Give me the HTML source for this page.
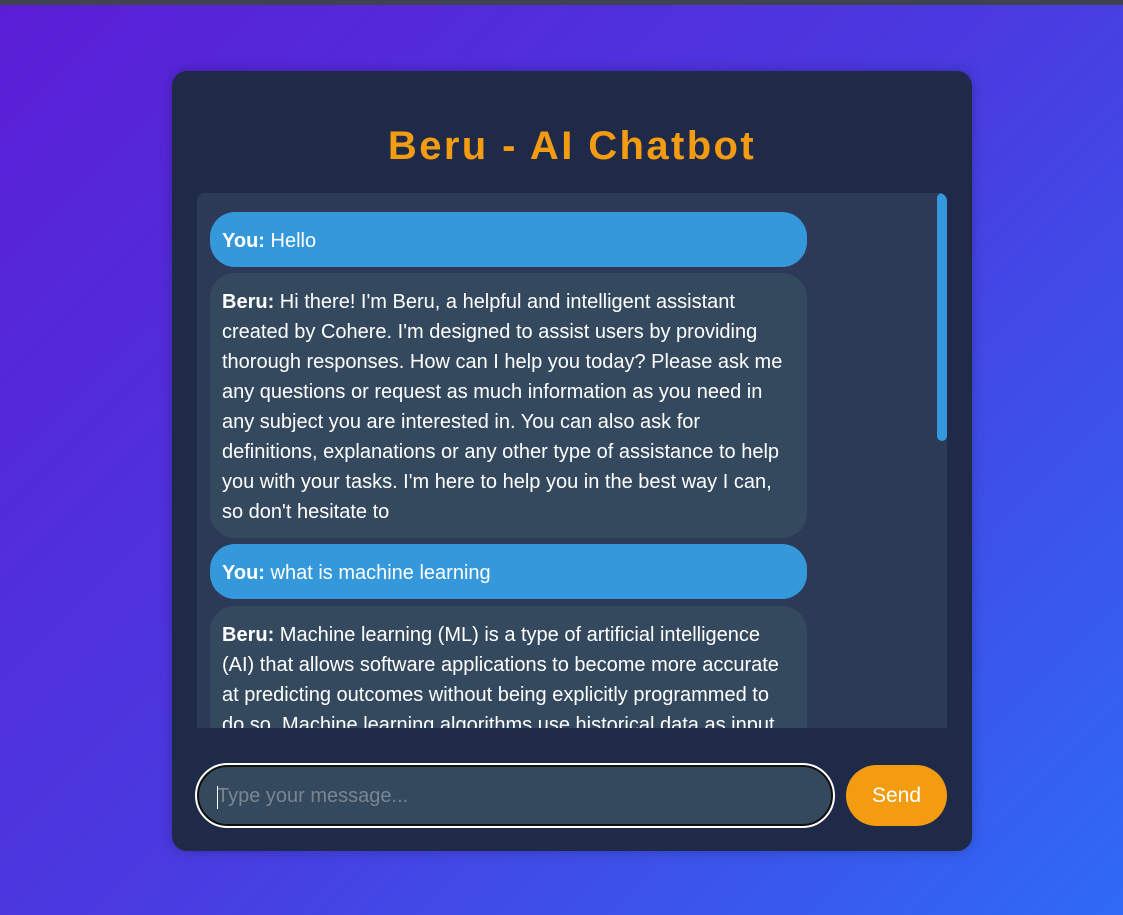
<!DOCTYPE html>
<html><head><style>
*{box-sizing:border-box;margin:0;padding:0}
html,body{width:1123px;height:915px;overflow:hidden}
body{background:linear-gradient(135deg,#5b1ed6 0%,#4a3ae0 50%,#2f6af5 100%);font-family:"Liberation Sans",sans-serif;position:relative}
.top{position:absolute;left:0;top:0;width:1123px;height:5px;background:#3f4350}
.card{position:absolute;left:172px;top:71px;width:800px;height:780px;background:#1f2a48;border-radius:15px;box-shadow:0 0 12px rgba(0,0,0,.25)}
h1{position:absolute;left:0;width:800px;top:53px;text-align:center;color:#f39c12;font-size:40px;font-weight:bold;letter-spacing:2.4px}
.chat{position:absolute;left:25px;top:122px;width:750px;height:535px;background:#2c3a58;border-radius:8px 8px 0 0;overflow:hidden}
.sb{position:absolute;right:0;top:0;width:10px;height:248px;background:#3498db;border-radius:5px}
.b{position:absolute;left:13px;width:597px;border-radius:25px;padding:14px 12px 10px;color:#fff;font-size:20px;line-height:30px}
.u{background:#3498db}
.a{background:#34495e}
.in{position:absolute;left:23px;top:692px;width:640px;height:65px;border:2px solid #fff;border-radius:33px;background:#34495e;box-shadow:inset 0 0 0 2px #111;color:#7b8591;font-size:20px;line-height:63px;padding-left:20px}
.in:before{content:"";position:absolute;left:20px;top:21px;width:1px;height:23px;background:#fff}
.send{position:absolute;left:674px;top:694px;width:101px;height:61px;border-radius:31px;background:#f39c12;color:#fff;font-size:21px;line-height:61px;text-align:center}
</style></head><body>
<div class="top"></div>
<div class="card">
<h1>Beru - AI Chatbot</h1>
<div class="chat">
<div class="sb"></div>
<div class="b u" style="top:19px;height:55px"><b>You:</b> Hello</div>
<div class="b a" style="top:80px;height:265px"><b>Beru:</b> Hi there! I'm Beru, a helpful and intelligent assistant created by Cohere. I'm designed to assist users by providing thorough responses. How can I help you today? Please ask me any questions or request as much information as you need in any subject you are interested in. You can also ask for definitions, explanations or any other type of assistance to help you with your tasks. I'm here to help you in the best way I can, so don't hesitate to</div>
<div class="b u" style="top:351px;height:55px"><b>You:</b> what is machine learning</div>
<div class="b a" style="top:413px;height:200px"><b>Beru:</b> Machine learning (ML) is a type of artificial intelligence (AI) that allows software applications to become more accurate at predicting outcomes without being explicitly programmed to do so. Machine learning algorithms use historical data as input</div>
</div>
<div class="in">Type your message...</div>
<div class="send">Send</div>
</div>
</body></html>
